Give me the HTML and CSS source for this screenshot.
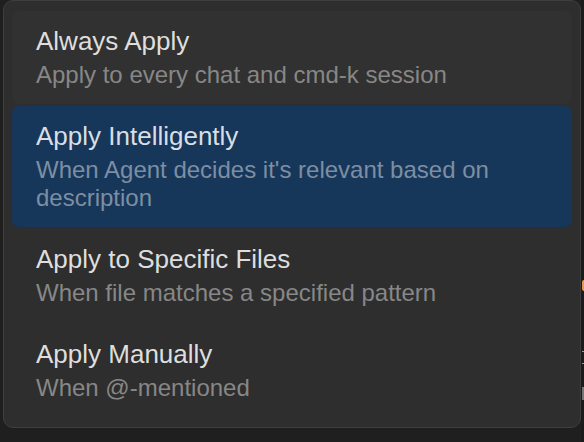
FILE: index.html
```html
<!DOCTYPE html>
<html>
<head>
<meta charset="utf-8">
<link rel="stylesheet" href="styles.css">
</head>
<body>
<div class="stage">
  <div class="menu">
    <div class="item item-hover">
      <div class="title">Always Apply</div>
      <div class="desc">Apply to every chat and cmd-k session</div>
    </div>
    <div class="item item-active">
      <div class="title">Apply Intelligently</div>
      <div class="desc">When Agent decides it's relevant based on description</div>
    </div>
    <div class="item">
      <div class="title">Apply to Specific Files</div>
      <div class="desc">When file matches a specified pattern</div>
    </div>
    <div class="item">
      <div class="title">Apply Manually</div>
      <div class="desc">When @-mentioned</div>
    </div>
  </div>
  <div class="behind">
    <span class="dot"></span>
    <span class="tick tick-a"></span>
    <span class="tick tick-b"></span>
    <span class="chip"></span>
  </div>
</div>
</body>
</html>
```

FILE: styles.css
```css
* { box-sizing: border-box; }
html, body {
  margin: 0;
  padding: 0;
  background: #1f1f1f;
  width: 584px;
  height: 442px;
  overflow: hidden;
  font-family: "Liberation Sans", Arial, sans-serif;
}
.stage {
  position: relative;
  width: 584px;
  height: 442px;
  padding-left: 3px;
}
.menu {
  width: 578px;
  background: #2e2e2e;
  border: 1px solid #3e3e3e;
  border-radius: 10px;
  padding: 10px 8px 10px 8px;
  display: flex;
  flex-direction: column;
  gap: 2px;
}
.item {
  border-radius: 7px;
  padding: 15px 24px 15px 24px;
  display: flex;
  flex-direction: column;
  gap: 4px;
}
.item-hover { background: #313131; }
.item-active { background: #17375a; }
.title {
  font-size: 26px;
  color: #dedede;
  line-height: normal;
}
.desc {
  font-size: 24px;
  color: #878787;
  line-height: normal;
}
.item-active .title { color: #d9dee4; }
.item-active .desc { color: #7d8ea3; }
.behind {
  position: absolute;
  right: 0;
  top: 0;
  width: 3px;
  height: 442px;
  background: #1b1b1b;
}
.dot {
  position: absolute;
  left: 1px;
  top: 280px;
  width: 4px;
  height: 11px;
  border-radius: 3px;
  background: #e39a4a;
}
.tick {
  position: absolute;
  left: 1px;
  width: 2px;
  height: 1px;
  background: #9a9a9a;
}
.tick-a { top: 351px; }
.tick-b { top: 363px; }
.chip {
  position: absolute;
  left: 1px;
  top: 387px;
  width: 2px;
  height: 13px;
  background: #777;
}
```
